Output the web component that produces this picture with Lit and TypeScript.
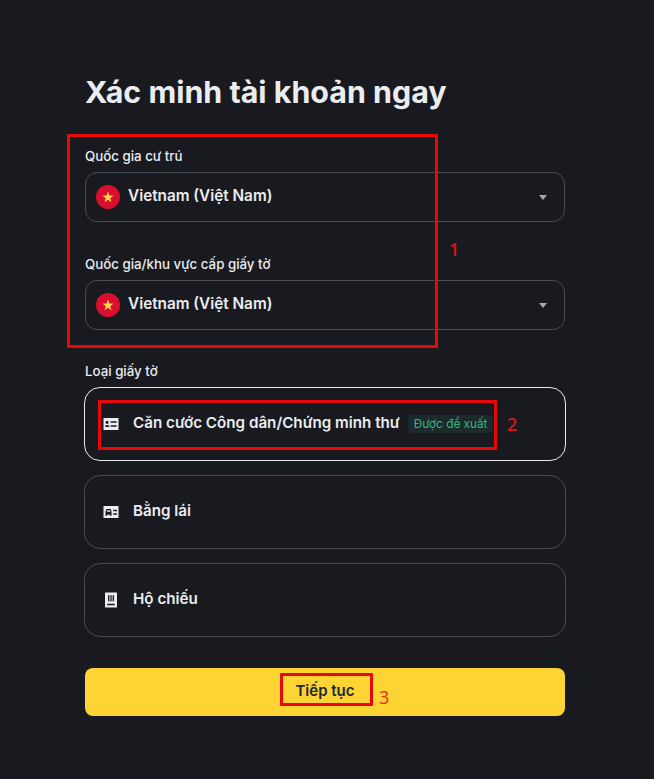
import { LitElement, html, css, svg } from "lit";
import { customElement } from "lit/decorators.js";

const flag = html`<svg class="flag" viewBox="0 0 24 24"><circle cx="12" cy="12" r="12" fill="#DA0E2F"/><path fill="#FFD84A" d="M12 6.500l1.400 4 4.200.1-3.350 2.550 1.200 4L12 14.800l-3.450 2.350 1.200-4-3.350-2.550 4.200-.1z"/></svg>`;

const idIcon = svg`<path fill-rule="evenodd" d="M2 4h20v16H2zM5 8v3.500h3.500V8zM11.500 8.200v2h8v-2zM11.500 13.500v2h8v-2zM4.500 13.500v2.500h5v-2.500z" fill="#EAECEF"/>`;
const carIcon = svg`<path fill-rule="evenodd" d="M2 4h20v16H2zM6 8l-1.300 3.500V17h2v-1.500h4V17h2v-5.500L11.700 8zM15 9v2h5V9zM15 13.500v2h5v-2zM7 9.500h3.700l.7 2H6.300z" fill="#EAECEF"/>`;
const passportIcon = svg`<path fill-rule="evenodd" d="M4 2h16v20H4zM8 5.500v8h8v-8zM7 17v2h10v-2z" fill="#EAECEF"/><path d="M10.500 5.500v8M13.500 5.500v8" stroke="#EAECEF" stroke-width="1.300"/>`;

@customElement("app-root")
export class AppRoot extends LitElement {
  static styles = css`
    :host {
      display: block;
      position: relative;
      width: 654px;
      height: 779px;
      overflow: hidden;
      background: #181a20;
      font-family: Inter, "Noto Sans", sans-serif;
      color: #eaecef;
    }
    .page {
      display: flex;
      flex-direction: column;
      box-sizing: border-box;
      width: 480px;
      margin-left: 85px;
      padding-top: 72px;
    }
    h1 {
      margin: 0 0 34px;
      font-size: 30.400px;
      line-height: 40px;
      font-weight: 700;
    }
    .label {
      height: 20px;
      margin-bottom: 6px;
      font-size: 13.300px;
      line-height: 20px;
      font-weight: 500;
    }
    .select {
      display: flex;
      align-items: center;
      box-sizing: border-box;
      height: 50px;
      margin-bottom: 32px;
      padding: 0 16px 0 10px;
      gap: 8px;
      border: 1px solid #474d57;
      border-radius: 12px;
      font-size: 15.300px;
      font-weight: 600;
    }
    .select.last { margin-bottom: 31px; }
    .flag { width: 24px; height: 24px; flex: none; }
    .name { flex: 1; padding-bottom: 3px; }
    .caret {
      width: 0;
      height: 0;
      border-left: 4.500px solid transparent;
      border-right: 4.500px solid transparent;
      border-top: 5px solid #a4a9b2;
      margin-right: 1.500px;
    }
    .cards { display: flex; flex-direction: column; gap: 14px; margin: 0 -1px; }
    .card {
      display: flex;
      align-items: center;
      box-sizing: border-box;
      height: 74px;
      padding: 0 16.500px;
      gap: 13.500px;
      border: 1px solid #474d57;
      border-radius: 16px;
      font-size: 15.200px;
      font-weight: 600;
    }
    .card.on { border-color: #eaecef; }
    .icon { width: 18px; height: 18px; flex: none; }
    .title { white-space: nowrap; padding-bottom: 4px; }
    .badge {
      margin-left: -5px;
      padding: 0 5.500px;
      height: 18px;
      line-height: 18px;
      font-size: 11.800px;
      font-weight: 400;
      color: #35b585;
      background: #1a2b2a;
      border-radius: 4px;
      white-space: nowrap;
    }
    .cta {
      display: flex;
      align-items: center;
      justify-content: center;
      height: 48px;
      margin-top: 31px;
      background: #fcd535;
      color: #202630;
      border-radius: 8px;
      font-size: 15px;
      font-weight: 600;
    }
    .cta span { padding-bottom: 4px; }
    .mark { position: absolute; box-sizing: border-box; border: 3px solid #e80808; }
    .m1 { left: 67px; top: 134px; width: 371px; height: 214px; }
    .m2 { left: 98px; top: 400px; width: 399px; height: 50px; }
    .m3 { left: 280px; top: 673px; width: 93px; height: 33px; border-radius: 1px; }
    .num { position: absolute; color: #d8161b; font-size: 18px; line-height: 22px; font-weight: 600; font-family: "Open Sans", sans-serif; }
    .n1 { left: 449px; top: 238px; }
    .n2 { left: 507px; top: 413px; }
    .n3 { left: 379px; top: 686px; color: #f02a1e; font-weight: 400; }
  `;

  private select(name: string, last = false) {
    return html`<div class="select ${last ? "last" : ""}">
      ${flag}<span class="name">${name}</span><i class="caret"></i>
    </div>`;
  }

  render() {
    return html`
      <div class="page">
        <h1>Xác minh tài khoản ngay</h1>
        <div class="label">Quốc gia cư trú</div>
        ${this.select("Vietnam (Việt Nam)")}
        <div class="label">Quốc gia/khu vực cấp giấy tờ</div>
        ${this.select("Vietnam (Việt Nam)", true)}
        <div class="label">Loại giấy tờ</div>
        <div class="cards">
          <div class="card on">
            <svg class="icon" viewBox="0 0 24 24">${idIcon}</svg>
            <span class="title">Căn cước Công dân/Chứng minh thư</span>
            <span class="badge">Được đề xuất</span>
          </div>
          <div class="card">
            <svg class="icon" viewBox="0 0 24 24">${carIcon}</svg>
            <span class="title">Bằng lái</span>
          </div>
          <div class="card">
            <svg class="icon" viewBox="0 0 24 24">${passportIcon}</svg>
            <span class="title">Hộ chiếu</span>
          </div>
        </div>
        <div class="cta"><span>Tiếp tục</span></div>
      </div>
      <div class="mark m1"></div>
      <div class="mark m2"></div>
      <div class="mark m3"></div>
      <div class="num n1">1</div>
      <div class="num n2">2</div>
      <div class="num n3">3</div>
    `;
  }
}
